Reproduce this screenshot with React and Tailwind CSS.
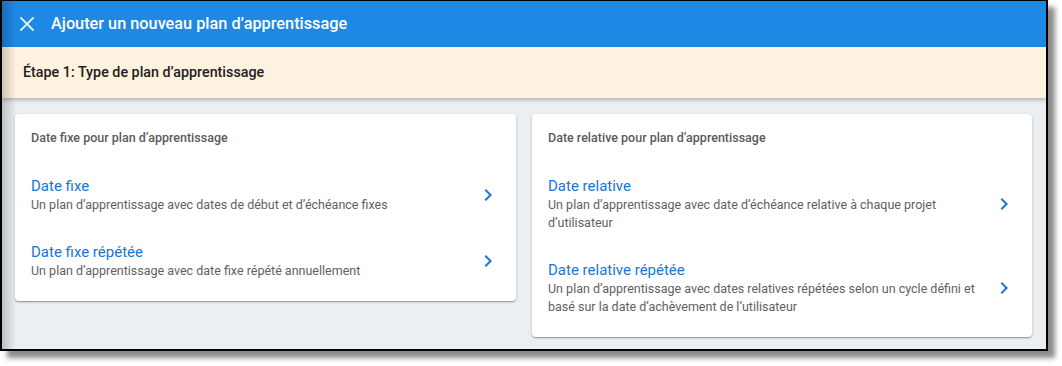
import React from "react";

const fixedItems = [
  {
    title: "Date fixe",
    desc: "Un plan d’apprentissage avec dates de début et d’échéance fixes",
  },
  {
    title: "Date fixe répétée",
    desc: "Un plan d’apprentissage avec date fixe répété annuellement",
  },
];

const relativeItems = [
  {
    title: "Date relative",
    desc: "Un plan d’apprentissage avec date d’échéance relative à chaque projet d’utilisateur",
  },
  {
    title: "Date relative répétée",
    desc: "Un plan d’apprentissage avec dates relatives répétées selon un cycle défini et basé sur la date d’achèvement de l’utilisateur",
  },
];

const ChevronRight = () => (
  <svg width="24" height="24" viewBox="0 0 24 24" className="shrink-0 fill-[#1976d2]">
    <path d="M10 6L8.59 7.41 13.17 12l-4.58 4.59L10 18l6-6z" />
  </svg>
);

const PlanCard = ({ heading, items, width }) => {
  return (
    <div
      className={`${width} bg-white rounded-[4px] pt-4 pb-[21px] px-4 shadow-[0_1px_3px_rgba(0,0,0,0.2),0_1px_1px_rgba(0,0,0,0.14),0_2px_1px_-1px_rgba(0,0,0,0.12)]`}
    >
      <div className="text-[12.5px] leading-4 font-medium text-[#5a5a5a] mb-[30px]">
        {heading}
      </div>
      <div className="flex flex-col gap-[28px]">
        {items.map((item) => (
          <div key={item.title} className="flex items-center cursor-pointer">
            <div className="flex-1 min-w-0">
              <div className="text-[15px] leading-5 text-[#1976d2]">
                {item.title}
              </div>
              <div className="text-[12.5px] leading-[18px] text-[#616161]">
                {item.desc}
              </div>
            </div>
            <ChevronRight />
          </div>
        ))}
      </div>
    </div>
  );
};

const App = () => {
  return (
    <div className="w-[1062px] h-[366px] bg-white font-['Roboto',sans-serif]">
      <div className="relative w-[1048px] h-[351px] flex flex-col bg-[#eceff1] border-2 border-t border-black shadow-[7px_7px_5px_rgba(0,0,0,0.45)] overflow-hidden">
        <div className="h-[46px] shrink-0 bg-[#1e88e5] flex items-center pl-[18px]">
          <svg width="14" height="14" viewBox="0 0 14 14" className="shrink-0">
            <path
              d="M1 1L13 13M13 1L1 13"
              stroke="white"
              strokeOpacity="0.9"
              strokeWidth="1.8"
              strokeLinecap="square"
            />
          </svg>
          <h1 className="ml-[17px] text-[16.3px] font-medium text-white">
            Ajouter un nouveau plan d’apprentissage
          </h1>
        </div>

        <div className="relative z-10 h-[51px] shrink-0 bg-[#fff3e0] flex items-center pl-[21px] shadow-[0_2px_4px_rgba(0,0,0,0.25)]">
          <span className="text-[14.3px] font-medium text-[#212121]">
            Étape 1: Type de plan d’apprentissage
          </span>
        </div>

        <div className="flex items-start gap-4 px-[13px] pt-4">
          <PlanCard
            heading="Date fixe pour plan d’apprentissage"
            items={fixedItems}
            width="w-[501px]"
          />
          <PlanCard
            heading="Date relative pour plan d’apprentissage"
            items={relativeItems}
            width="w-[500px]"
          />
        </div>

        <div className="pointer-events-none absolute left-0 top-0 bottom-0 w-[14px] z-20 bg-gradient-to-r from-black/20 to-transparent" />
      </div>
    </div>
  );
};

export default App;
